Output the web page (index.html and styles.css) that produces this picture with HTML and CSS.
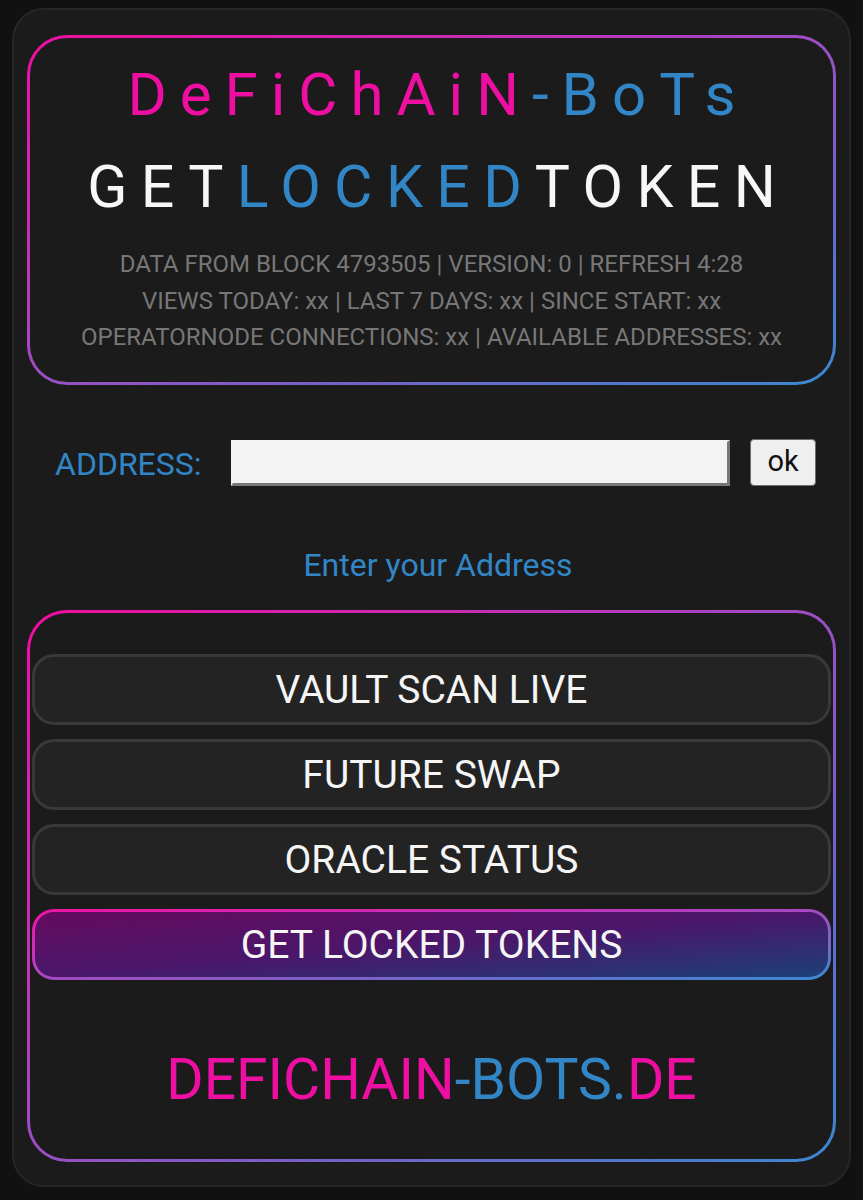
FILE: index.html
```html
<!DOCTYPE html>
<html lang="de">
<head>
<meta charset="utf-8">
<title>DeFiChAiN-BoTs – Get Locked Token</title>
<link rel="stylesheet" href="styles.css">
</head>
<body>
<main class="panel">
  <section class="card header">
    <h1 class="brand"><span class="pink">DeFiChAiN</span><span class="blue">-BoTs</span></h1>
    <h2 class="app"><span class="white">GET</span><span class="blue">LOCKED</span><span class="white">TOKEN</span></h2>
    <div class="stats">
      <p>DATA FROM BLOCK 4793505 | VERSION: 0 | REFRESH 4:28</p>
      <p>VIEWS TODAY: xx | LAST 7 DAYS: xx | SINCE START: xx</p>
      <p>OPERATORNODE CONNECTIONS: xx | AVAILABLE ADDRESSES: xx</p>
    </div>
  </section>

  <form class="address-row" onsubmit="return false;">
    <label class="address-label" for="addr">ADDRESS:</label>
    <input class="address-input" id="addr" type="text">
    <button class="ok-btn" type="submit">ok</button>
  </form>

  <p class="hint">Enter your Address</p>

  <nav class="card menu">
    <a class="menu-btn" href="#">VAULT SCAN LIVE</a>
    <a class="menu-btn" href="#">FUTURE SWAP</a>
    <a class="menu-btn" href="#">ORACLE STATUS</a>
    <a class="menu-btn active" href="#">GET LOCKED TOKENS</a>
    <p class="site"><span class="pink">DEFICHAIN</span><span class="blue">-BOTS.</span><span class="pink">DE</span></p>
  </nav>
</main>
</body>
</html>
```

FILE: styles.css
```css
* { box-sizing: border-box; }

html, body {
  background: #111111;
}

body {
  margin: 8px 12px 12px;
  font-family: Roboto, "Noto Sans", "Liberation Sans", sans-serif;
  color: #f2f2f2;
}

.pink { color: #ee0fa2; }
.blue { color: #3286c6; }
.white { color: #f7f7f7; }

.panel {
  background: #1b1b1b;
  border: 2px solid #262626;
  border-radius: 32px;
  padding: 25px 13px 23px;
  display: flex;
  flex-direction: column;
}

.card {
  border: 3px solid transparent;
  border-radius: 40px;
  background:
    linear-gradient(#1b1b1b, #1b1b1b) padding-box,
    linear-gradient(to bottom right, #f00d9f 0%, #c530b8 30%, #9a4fc4 50%, #6f64c8 72%, #3a88d2 100%) border-box;
}

.header {
  padding: 22px 0 26px;
  text-align: center;
}

.brand {
  margin: 0;
  font-weight: 400;
  font-size: 60px;
  line-height: 70px;
  letter-spacing: 13px;
  padding-left: 13px;
}

.app {
  margin: 17px 0 0;
  font-weight: 400;
  font-size: 59px;
  line-height: 80px;
  letter-spacing: 13.4px;
  padding-left: 13.4px;
}

.stats {
  margin-top: 19px;
  color: #777777;
  font-size: 24px;
  line-height: 36.7px;
}

.stats p { margin: 0; }

.address-row {
  margin: 54px 0 0;
  display: flex;
  align-items: center;
  height: 47px;
  padding-left: 28px;
}

.address-label {
  color: #3286c6;
  font-size: 32px;
  width: 176px;
  flex: none;
  position: relative;
  top: 1px;
}

.address-input {
  width: 499px;
  height: 46px;
  flex: none;
  background: #f3f3f3;
  border-style: solid;
  border-width: 2px 3px 3px 2px;
  border-color: #f3f3f3 #777777 #777777 #f3f3f3;
  padding: 0 6px;
  font-size: 20px;
  font-family: inherit;
  outline: none;
}

.ok-btn {
  margin-left: 20px;
  width: 66px;
  height: 47px;
  flex: none;
  background: #efefef;
  border: 1px solid #6e6e6e;
  border-radius: 4px;
  font-family: Roboto, "Liberation Sans", sans-serif;
  font-size: 29px;
  color: #111;
  padding: 0 0 3px;
  cursor: pointer;
}

.hint {
  margin: 60px 0 0;
  padding-left: 13px;
  text-align: center;
  color: #3286c6;
  font-size: 32px;
  line-height: 38px;
}

.menu {
  margin-top: 26px;
  padding: 41px 2px 45px;
  display: flex;
  flex-direction: column;
  gap: 14px;
}

.menu-btn {
  display: flex;
  align-items: center;
  justify-content: center;
  height: 71px;
  border: 3px solid #393939;
  border-radius: 22px;
  background: #232323;
  color: #f5f5f5;
  font-size: 39px;
  text-decoration: none;
}

.menu-btn.active {
  border-color: transparent;
  background:
    linear-gradient(to bottom right, #640a5e 0%, #4a176a 50%, #1c4076 100%) padding-box,
    linear-gradient(to bottom right, #f013a4 0%, #c136bb 35%, #9a50c4 55%, #3a8ad4 100%) border-box;
}

.site {
  margin: 52px 0 0;
  text-align: center;
  font-size: 57px;
  line-height: 68px;
}
```
